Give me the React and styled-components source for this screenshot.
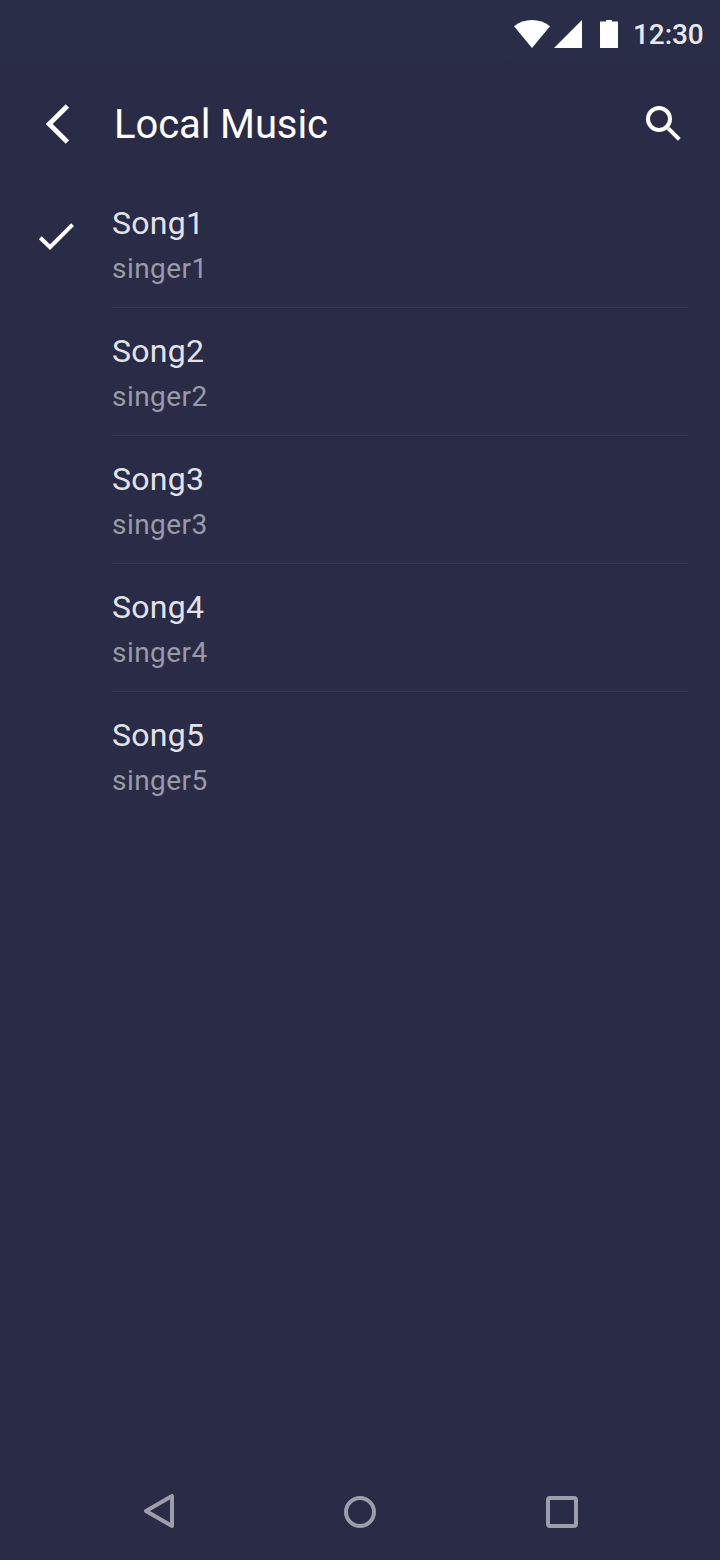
import React from 'react';
import styled, { createGlobalStyle } from 'styled-components';

const GlobalStyle = createGlobalStyle`
  * { box-sizing: border-box; }
  body { margin: 0; background: #2a2b46; font-family: Roboto, sans-serif; }
`;

const Screen = styled.div`
  width: 720px;
  height: 1560px;
  display: flex;
  flex-direction: column;
  background: #2a2b46;
  color: #fff;
`;

const StatusBar = styled.header`
  height: 68px;
  padding: 0 16px 0 0;
  display: flex;
  align-items: center;
  justify-content: flex-end;
  background: linear-gradient(#292d47 60px, #2a2b46);
`;

const StatusIcons = styled.svg`
  width: 104px;
  height: 28px;
  fill: #fff;
  flex: none;
`;

const Clock = styled.time`
  width: 71px;
  margin-left: 15px;
  padding-top: 2px;
  font-size: 28px;
  line-height: 32px;
  font-weight: 500;
  letter-spacing: -0.1px;
  white-space: nowrap;
  color: #e9e9ec;
`;

const AppBar = styled.nav`
  height: 112px;
  padding: 0 36px 0 40px;
  display: flex;
  align-items: center;
`;

const IconButton = styled.button`
  width: 40px;
  height: 40px;
  padding: 0;
  border: 0;
  background: none;
  flex: none;
`;

const LineIcon = styled.svg`
  display: block;
  width: ${(p) => p.$size}px;
  height: ${(p) => p.$size}px;
  fill: none;
  stroke: ${(p) => p.$color || '#fff'};
  stroke-width: ${(p) => p.$stroke || 4};
`;

const Title = styled.h1`
  flex: 1;
  margin: 0 0 0 34px;
  padding-top: 2px;
  font-size: 40px;
  line-height: 48px;
  font-weight: 400;
  letter-spacing: -0.1px;
`;

const SongList = styled.ul`
  flex: 1;
  margin: 0;
  padding: 0;
  list-style: none;
`;

const SongRow = styled.li`
  height: 128px;
  padding: 0 32px;
  display: flex;
`;

const Marker = styled.div`
  width: 80px;
  padding-top: 32px;
`;

const SongInfo = styled.div`
  flex: 1;
  padding-top: 22px;
  border-bottom: 1px solid ${(p) => (p.$last ? 'transparent' : '#36374d')};
`;

const SongName = styled.div`
  font-size: 32px;
  line-height: 42px;
  letter-spacing: 0.3px;
  color: #e3e3e6;
`;

const Singer = styled.div`
  margin-top: 4px;
  font-size: 28px;
  line-height: 42px;
  letter-spacing: 0.45px;
  color: #999aa5;
`;

const SystemNav = styled.footer`
  height: 96px;
  padding: 0 138px 0 140px;
  display: flex;
  align-items: center;
  justify-content: space-between;
`;

const songs = [1, 2, 3, 4, 5].map((n) => ({ name: `Song${n}`, singer: `singer${n}` }));

export default function App() {
  return (
    <Screen>
      <GlobalStyle />
      <StatusBar>
        <StatusIcons viewBox="0 0 104 28">
          <path d="M0 6.2C5.2 2.2 11.3 0 18 0s12.8 2.2 18 6.2L18 28Z" />
          <path d="M40 28 68 0V28Z" />
          <path d="M86 1.5h6V0h6v1.5h6V28H86Z" />
        </StatusIcons>
        <Clock>12:30</Clock>
      </StatusBar>
      <AppBar>
        <IconButton aria-label="Back">
          <LineIcon $size={40} $stroke={4.8} viewBox="0 0 40 40">
            <path d="M27.4 2 9.2 20l18.2 18" />
          </LineIcon>
        </IconButton>
        <Title>Local Music</Title>
        <IconButton aria-label="Search">
          <LineIcon $size={40} viewBox="0 0 40 40">
            <circle cx="15" cy="15" r="11" />
            <path d="m24.3 24.3 11 11" />
          </LineIcon>
        </IconButton>
      </AppBar>
      <SongList>
        {songs.map((song, i) => (
          <SongRow key={song.name}>
            <Marker>
              {i === 0 && (
                <LineIcon $size={48} viewBox="0 0 48 48">
                  <path d="m8.3 25.7 9.7 9.5 22.6-22.5" />
                </LineIcon>
              )}
            </Marker>
            <SongInfo $last={i === songs.length - 1}>
              <SongName>{song.name}</SongName>
              <Singer>{song.singer}</Singer>
            </SongInfo>
          </SongRow>
        ))}
      </SongList>
      <SystemNav>
        <LineIcon $size={40} $color="#9d9eaa" viewBox="0 0 40 40">
          <path d="M6 19 32 4v30Z" strokeLinejoin="round" />
        </LineIcon>
        <LineIcon $size={40} $color="#9d9eaa" viewBox="0 0 40 40">
          <circle cx="19" cy="20" r="14" />
        </LineIcon>
        <LineIcon $size={40} $color="#9d9eaa" viewBox="0 0 40 40">
          <rect x="6" y="6" width="28" height="28" rx="2" />
        </LineIcon>
      </SystemNav>
    </Screen>
  );
}
